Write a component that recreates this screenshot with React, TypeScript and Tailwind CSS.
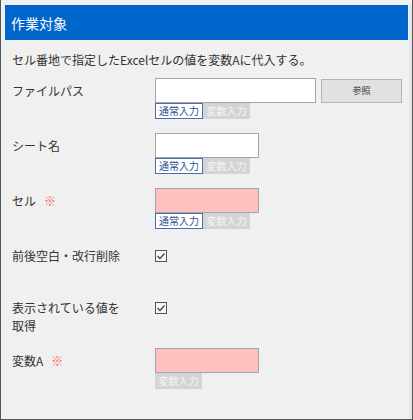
const FONT = { fontFamily: '"Noto Sans CJK JP", "Noto Sans", sans-serif' };

function Toggle({ normal = true }: { normal?: boolean }) {
  return (
    <div className="flex h-[16px]">
      {normal && (
        <div className="flex h-[16px] w-[48px] items-center justify-center border border-[#4a6db0] bg-white text-[10px] leading-none text-[#2c4f8f]">
          通常入力
        </div>
      )}
      <div className="flex h-[16px] w-[47px] items-center justify-center bg-[#d4d4d4] text-[10px] leading-none text-[#f4f4f4]">
        変数入力
      </div>
    </div>
  );
}

function Required() {
  return <span className="ml-[8px] text-[#ff5a5a]">※</span>;
}

function Check() {
  return (
    <svg width="12" height="12" viewBox="0 0 12 12" className="block">
      <rect x="0.5" y="0.5" width="11" height="11" fill="#f7f7f7" stroke="#555" />
      <path d="M2.5 6 L5 8.5 L9.5 3.5" fill="none" stroke="#444" strokeWidth="1.3" />
    </svg>
  );
}

export default function App() {
  return (
    <div
      style={FONT}
      className="h-[420px] w-[413px] border-x border-b border-[#555] bg-[#f0f0f0] pl-[4px] pt-[5px] text-[12px] leading-[18px] text-[#333]"
    >
      <div className="flex h-full">
        <div className="flex-1">
          <div className="flex h-[35px] items-center bg-[#0066cc] pl-[6px] text-[14px] text-white">
            作業対象
          </div>

          <p className="mt-[11px] pl-[7px]">セル番地で指定したExcelセルの値を変数Aに代入する。</p>

          {/* ファイルパス */}
          <div className="mt-[9px] flex">
            <div className="flex h-[25px] w-[150px] items-center pl-[7px]">ファイルパス</div>
            <div>
              <div className="flex">
                <div className="h-[25px] w-[161px] border border-[#a5a5a5] bg-white" />
                <button className="ml-[5px] mt-[1px] h-[24px] w-[81px] border border-[#b4b4b4] bg-[#e1e1e1] text-[9px] text-[#333]">
                  参照
                </button>
              </div>
              <Toggle />
            </div>
          </div>

          {/* シート名 */}
          <div className="mt-[14px] flex">
            <div className="flex h-[25px] w-[150px] items-center pl-[7px]">シート名</div>
            <div>
              <div className="h-[25px] w-[104px] border border-[#a5a5a5] bg-white" />
              <Toggle />
            </div>
          </div>

          {/* セル */}
          <div className="mt-[14px] flex">
            <div className="flex h-[25px] w-[150px] items-center pl-[7px]">
              セル
              <Required />
            </div>
            <div>
              <div className="h-[25px] w-[104px] border border-[#a5a5a5] bg-[#ffc0c0]" />
              <Toggle />
            </div>
          </div>

          {/* 前後空白・改行削除 */}
          <div className="mt-[14px] flex h-[25px] items-center">
            <div className="w-[150px] pl-[7px]">
              <div className="w-[112px]">前後空白・改行削除</div>
            </div>
            <Check />
          </div>

          {/* 表示されている値を取得 */}
          <div className="mt-[31px] flex items-start">
            <div className="w-[150px] pl-[7px]">
              <div className="w-[112px]">表示されている値を取得</div>
            </div>
            <div className="mt-[3px]">
              <Check />
            </div>
          </div>

          {/* 変数A */}
          <div className="mt-[13px] flex">
            <div className="flex h-[25px] w-[150px] items-center pl-[7px]">
              変数A
              <Required />
            </div>
            <div>
              <div className="h-[25px] w-[104px] border border-[#a5a5a5] bg-[#ffc0c0]" />
              <Toggle normal={false} />
            </div>
          </div>
        </div>
        <div className="ml-[1px] w-[3px] bg-[#dfe6ef]" />
      </div>
    </div>
  );
}
